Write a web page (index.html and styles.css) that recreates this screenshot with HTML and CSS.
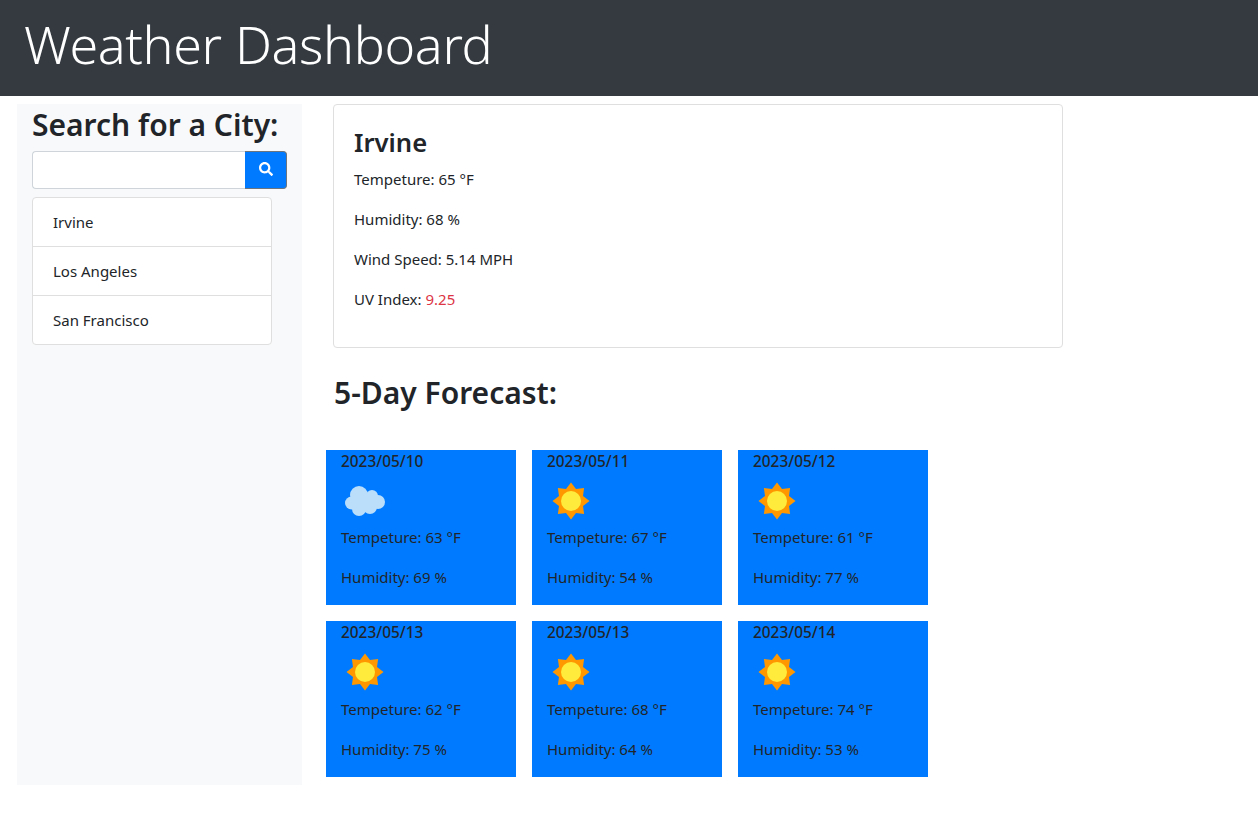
FILE: index.html
```html
<!DOCTYPE html>
<html lang="en">
<head>
<meta charset="utf-8">
<title>Weather Dashboard</title>
<link rel="stylesheet" href="styles.css">
</head>
<body>
<svg class="defs" width="0" height="0" aria-hidden="true">
  <symbol id="sun" viewBox="0 0 50 50">
    <g transform="translate(-1 0)">
      <polygon fill="#ff9800" points="25,6.5 30,13 38.1,11.9 37,20 43.5,25 37,30 38.1,38.1 30,37 25,43.5 20,37 11.9,38.1 13,30 6.5,25 13,20 11.9,11.9 20,13" />
      <circle cx="25" cy="25" r="10" fill="#ffeb3b" />
    </g>
  </symbol>
  <symbol id="cloud" viewBox="0 0 50 50">
    <g fill="#bbdefb">
      <circle cx="18" cy="19" r="9" />
      <circle cx="31" cy="20" r="6" />
      <circle cx="37" cy="26" r="7" />
      <circle cx="10.5" cy="27" r="6.5" />
      <circle cx="18" cy="33" r="7" />
      <circle cx="29" cy="31" r="7" />
      <rect x="12" y="20" width="24" height="12" />
    </g>
  </symbol>
</svg>
<header class="topbar"><h1 class="title">Weather Dashboard</h1></header>
<div class="layout">
  <aside class="sidebar">
    <h2 class="side-title">Search for a City:</h2>
    <form class="search">
      <input class="search-input" type="text" aria-label="City">
      <button class="search-btn" type="button" aria-label="Search">
        <svg class="search-icon" viewBox="0 0 512 512"><path fill="currentColor" d="M505 442.7L405.3 343c-4.5-4.5-10.6-7-17-7H372c27.6-35.3 44-79.7 44-128C416 93.1 322.9 0 208 0S0 93.1 0 208s93.1 208 208 208c48.3 0 92.7-16.4 128-44v16.3c0 6.4 2.5 12.5 7 17l99.7 99.7c9.4 9.4 24.6 9.4 33.9 0l28.3-28.3c9.4-9.4 9.4-24.6.1-34zM208 336c-70.7 0-128-57.2-128-128 0-70.7 57.2-128 128-128 70.7 0 128 57.2 128 128 0 70.7-57.2 128-128 128z"/></svg>
      </button>
    </form>
    <ul class="cities">
      <li class="city">Irvine</li>
      <li class="city">Los Angeles</li>
      <li class="city">San Francisco</li>
    </ul>
  </aside>
  <main class="content">
    <section class="current">
      <h3 class="current-city">Irvine</h3>
      <p class="stat">Tempeture: 65 °F</p>
      <p class="stat">Humidity: 68 %</p>
      <p class="stat">Wind Speed: 5.14 MPH</p>
      <p class="stat">UV Index: <span class="uv">9.25</span></p>
    </section>
    <h2 class="forecast-title">5-Day Forecast:</h2>
    <div class="forecast">
      <article class="day"><h6 class="date">2023/05/10</h6><svg class="wx"><use href="#cloud"/></svg><p class="stat">Tempeture: 63 °F</p><p class="stat">Humidity: 69 %</p></article>
      <article class="day"><h6 class="date">2023/05/11</h6><svg class="wx"><use href="#sun"/></svg><p class="stat">Tempeture: 67 °F</p><p class="stat">Humidity: 54 %</p></article>
      <article class="day"><h6 class="date">2023/05/12</h6><svg class="wx"><use href="#sun"/></svg><p class="stat">Tempeture: 61 °F</p><p class="stat">Humidity: 77 %</p></article>
      <article class="day"><h6 class="date">2023/05/13</h6><svg class="wx"><use href="#sun"/></svg><p class="stat">Tempeture: 62 °F</p><p class="stat">Humidity: 75 %</p></article>
      <article class="day"><h6 class="date">2023/05/13</h6><svg class="wx"><use href="#sun"/></svg><p class="stat">Tempeture: 68 °F</p><p class="stat">Humidity: 64 %</p></article>
      <article class="day"><h6 class="date">2023/05/14</h6><svg class="wx"><use href="#sun"/></svg><p class="stat">Tempeture: 74 °F</p><p class="stat">Humidity: 53 %</p></article>
    </div>
  </main>
</div>
</body>
</html>
```
FILE: styles.css
```css
* { box-sizing: border-box; }
html, body { margin: 0; }
body {
  font-family: "Noto Sans", "Open Sans", sans-serif;
  font-size: 15px;
  line-height: 24px;
  color: #212529;
  background: #fff;
}
.defs { position: absolute; }
.topbar {
  height: 96px;
  background: #343a40;
  padding: 0 24px 8px;
  display: flex;
  align-items: center;
}
.title {
  margin: 0;
  font-size: 52px;
  font-weight: 300;
  line-height: 1.2;
  color: #fff;
  letter-spacing: -0.35px;
}
.layout {
  display: flex;
  padding: 8px 0 0 17px;
  align-items: stretch;
}
.sidebar {
  width: 285px;
  height: 681px;
  background: #f8f9fa;
  padding: 0 15px;
}
.side-title {
  margin: 1px 0 7px;
  font-size: 30px;
  font-weight: 600;
  line-height: 39px;
  white-space: nowrap;
}
.search { display: flex; height: 38px; margin-bottom: 8px; }
.search-input {
  flex: 1;
  min-width: 0;
  border: 1px solid #ced4da;
  border-right: 0;
  border-radius: 4px 0 0 4px;
  background: #fff;
}
.search-btn {
  width: 42px;
  border: 1px solid #6c757d;
  border-left: 0;
  border-radius: 0 4px 4px 0;
  background: #007bff;
  color: #fff;
  padding: 0;
  display: flex;
  align-items: center;
  justify-content: center;
}
.search-icon { width: 14px; height: 14px; margin-top: -3px; }
.cities {
  list-style: none;
  margin: 0;
  padding: 0;
  width: 240px;
  background: #fff;
  border: 1px solid #dfdfdf;
  border-radius: 4px;
}
.city { height: 48px; padding: 12px 20px; }
.city + .city { height: 49px; border-top: 1px solid #dfdfdf; }
.content { margin-left: 24px; }
.current {
  width: 730px;
  height: 244px;
  margin-left: 7px;
  border: 1px solid #dfdfdf;
  border-radius: 4px;
  padding: 20px;
}
.current-city {
  margin: 1px 0 7px;
  font-size: 25.6px;
  font-weight: 600;
  line-height: 34px;
}
.stat { margin: 0 0 16px; }
.uv { color: #dc3545; }
.forecast-title {
  margin: 25px 0 0 8px;
  font-size: 30px;
  font-weight: 600;
  line-height: 39px;
}
.forecast {
  display: grid;
  grid-template-columns: repeat(3, 190px);
  gap: 16px;
  margin-top: 38px;
}
.day {
  height: 155.4px;
  background: #007bff;
  padding: 0 15px;
}
.date { margin: 0; padding-top: 1px; font-size: 15.4px; font-weight: 500; line-height: 22px; }
.wx { display: block; width: 50px; height: 50px; margin: 3px 0 -0.8px; }
```
